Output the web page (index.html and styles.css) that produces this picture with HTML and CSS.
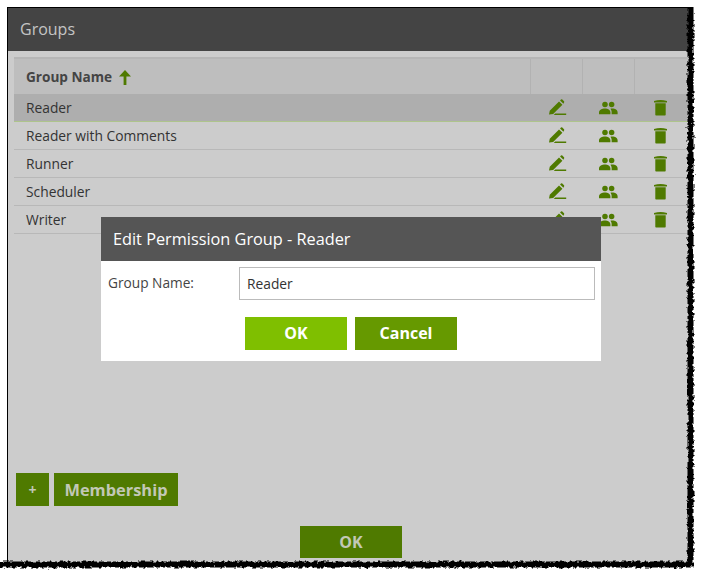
FILE: index.html
```html
<!DOCTYPE html>
<html lang="en">
<head>
<meta charset="utf-8">
<title>Groups</title>
<link rel="stylesheet" href="styles.css">
</head>
<body>
<svg width="0" height="0" class="defs">
  <symbol id="i-edit" viewBox="0 0 20 18"><path d="M1 16.5 L1.8 12.4 L11.6 2.6 L15.2 6.2 L5.4 16 Z M12.7 1.5 L13.7 .6 Q14.4 0 15.1 .6 L16.9 2.4 Q17.5 3.1 16.9 3.8 L16.3 5.1 Z M7.6 15.4 H19.2 V17 H6 Z"/></symbol>
  <symbol id="i-group" viewBox="0 0 20 14"><circle cx="6.3" cy="3.2" r="2.9"/><circle cx="13.3" cy="3.2" r="2.9"/><path d="M0 13.6 V11.6 C0 8.6 3.4 7.4 6.3 7.4 C9.2 7.4 12 8.6 12 11.6 V13.6 Z M13.3 13.6 V11.2 C13.3 9.8 12.8 8.7 12 7.8 C15.4 6.8 19.6 8.4 19.6 11.4 V13.6 Z"/></symbol>
  <symbol id="i-trash" viewBox="0 0 14 17"><path d="M0 1.6 Q7 -.6 14 1.6 V3 H0 Z M1.4 4 H12.6 V16.2 Q12.6 17 11.8 17 H2.2 Q1.4 17 1.4 16.2 Z"/></symbol>
</svg>

<main class="window">
  <header class="window-head">Groups</header>
  <div class="table">
    <div class="row row-head">
      <div class="cell cell-name">Group Name
        <svg class="sort" viewBox="0 0 12 15" width="12" height="15"><path d="M6 0 L12 6.6 H7.4 V15 H4.6 V6.6 H0 Z"/></svg>
      </div>
      <div class="cell cell-act"></div><div class="cell cell-act"></div><div class="cell cell-act"></div>
    </div>
    <div class="row row-active">
      <div class="cell cell-name">Reader</div>
      <div class="cell cell-act"><svg class="ic-edit"><use href="#i-edit"/></svg></div>
      <div class="cell cell-act"><svg class="ic-group"><use href="#i-group"/></svg></div>
      <div class="cell cell-act"><svg class="ic-trash"><use href="#i-trash"/></svg></div>
    </div>
    <div class="row">
      <div class="cell cell-name">Reader with Comments</div>
      <div class="cell cell-act"><svg class="ic-edit"><use href="#i-edit"/></svg></div>
      <div class="cell cell-act"><svg class="ic-group"><use href="#i-group"/></svg></div>
      <div class="cell cell-act"><svg class="ic-trash"><use href="#i-trash"/></svg></div>
    </div>
    <div class="row">
      <div class="cell cell-name">Runner</div>
      <div class="cell cell-act"><svg class="ic-edit"><use href="#i-edit"/></svg></div>
      <div class="cell cell-act"><svg class="ic-group"><use href="#i-group"/></svg></div>
      <div class="cell cell-act"><svg class="ic-trash"><use href="#i-trash"/></svg></div>
    </div>
    <div class="row">
      <div class="cell cell-name">Scheduler</div>
      <div class="cell cell-act"><svg class="ic-edit"><use href="#i-edit"/></svg></div>
      <div class="cell cell-act"><svg class="ic-group"><use href="#i-group"/></svg></div>
      <div class="cell cell-act"><svg class="ic-trash"><use href="#i-trash"/></svg></div>
    </div>
    <div class="row">
      <div class="cell cell-name">Writer</div>
      <div class="cell cell-act"><svg class="ic-edit"><use href="#i-edit"/></svg></div>
      <div class="cell cell-act"><svg class="ic-group"><use href="#i-group"/></svg></div>
      <div class="cell cell-act"><svg class="ic-trash"><use href="#i-trash"/></svg></div>
    </div>
  </div>
  <div class="actions">
    <button class="btn btn-dim btn-plus">+</button>
    <button class="btn btn-dim btn-member">Membership</button>
  </div>
  <div class="footer">
    <button class="btn btn-dim btn-wide">OK</button>
  </div>
</main>

<section class="modal">
  <h2 class="modal-head">Edit Permission Group - Reader</h2>
  <div class="modal-body">
    <div class="field">
      <label class="field-label" for="group-name">Group Name:</label>
      <input class="field-input" id="group-name" type="text" value="Reader">
    </div>
    <div class="modal-actions">
      <button class="btn btn-wide btn-primary">OK</button>
      <button class="btn btn-wide btn-secondary">Cancel</button>
    </div>
  </div>
</section>

<svg class="torn" width="704" height="578" viewBox="0 0 704 578">
  <defs>
    <filter id="jag" x="-40" y="-40" width="800" height="680" filterUnits="userSpaceOnUse" color-interpolation-filters="sRGB">
      <feTurbulence type="fractalNoise" baseFrequency="0.3" numOctaves="2" seed="11" result="n"/>
      <feDisplacementMap in="SourceGraphic" in2="n" scale="5" xChannelSelector="R" yChannelSelector="G"/>
      <feGaussianBlur stdDeviation="0.6"/>
    </filter>
  </defs>
  <path class="torn-edge" filter="url(#jag)" d="M690.5 -20 V564.5 H-20 V620 H740 V-20 Z"/>
  <path class="torn-fix" d="M0 0 H704 V7 H0 Z M0 7 H7 V560 H0 Z"/>
</svg>
</body>
</html>
```
FILE: styles.css
```css
* { box-sizing: border-box; }
html, body { margin: 0; padding: 0; }
body {
  position: relative;
  width: 704px;
  height: 578px;
  overflow: hidden;
  background: #fff;
  font-family: "Open Sans", "Liberation Sans", sans-serif;
  color: #333;
}
.defs { position: absolute; }
.window {
  display: flex;
  flex-direction: column;
  width: 690px;
  height: 565px;
  margin: 7px 0 0 7px;
  border-top: 1px solid #000;
  border-left: 1px solid #000;
  background: #ccc;
}
.window-head {
  height: 43px;
  padding-left: 12px;
  background: #444;
  color: #c4c4c4;
  font-size: 16px;
  line-height: 42px;
}
.table {
  margin: 6px 0 0 6px;
  border-top: 2px solid #b6b6b6;
}
.row {
  display: flex;
  height: 28px;
  border-bottom: 1px solid #b8b8b8;
  font-size: 13.8px;
  line-height: 27px;
}
.row-head {
  height: 35px;
  background: #bebebe;
  border-bottom: 0;
  color: #444;
  font-weight: 700;
  font-size: 13.6px;
}
.row-head .cell-name { line-height: 34px; }
.row-head .cell-act { border-left: 1px solid #b2b2b2; }
.row-active {
  background: #aeaeae;
  border-bottom-color: #aec48c;
}
.cell-name {
  display: flex;
  align-items: center;
  gap: 7px;
  flex: 0 0 516px;
  padding-left: 12px;
}
.cell-act {
  display: flex;
  align-items: center;
  justify-content: center;
  flex: 0 0 52px;
}
.sort { fill: #4f7a00; margin-top: 1px; }
.cell-act svg { fill: #4f7a00; }
.ic-edit { width: 19px; height: 17px; margin-left: 2px; }
.ic-group { width: 19px; height: 14px; margin-left: 1px; }
.ic-trash { width: 13px; height: 17px; margin-left: 1px; }
.actions {
  display: flex;
  gap: 5px;
  margin: 239px 0 0 8px;
}
.footer {
  display: flex;
  justify-content: center;
  margin-top: 20px;
  width: 686px;
}
.btn {
  border: 0;
  padding: 0;
  font-family: inherit;
  font-weight: 700;
  font-size: 16px;
  height: 33px;
  color: #fff;
}
.btn-dim { background: #4f7a00; color: #c2c8b6; }
.btn-plus { width: 33px; font-size: 14px; }
.btn-member { width: 124px; font-size: 16.4px; }
.btn-wide { width: 102px; }
.footer .btn-wide { height: 32px; }
.btn-primary { background: #7fbf00; padding-bottom: 2px; }
.btn-secondary { background: #669900; padding-bottom: 2px; }
.modal {
  position: absolute;
  left: 101px;
  top: 217px;
  width: 500px;
  height: 144px;
  background: #fff;
}
.modal-head {
  margin: 0;
  height: 44px;
  padding-left: 12px;
  background: #555;
  color: #fff;
  font-size: 16.3px;
  font-weight: 400;
  line-height: 44px;
}
.modal-body { padding: 6px 6px 0 6px; }
.field {
  display: flex;
  align-items: center;
  height: 33px;
}
.field-label {
  flex: 0 0 132px;
  padding-left: 1px;
  font-size: 13.7px;
  color: #444;
  margin-top: -2px;
}
.field-input {
  flex: 1;
  height: 33px;
  padding: 0 7px;
  border: 1.5px solid #bbb;
  border-radius: 0;
  outline: 0;
  font: 13.8px "Open Sans", "Liberation Sans", sans-serif;
  color: #333;
}
.modal-actions {
  display: flex;
  justify-content: center;
  gap: 8px;
  margin-top: 17px;
}
.torn {
  position: absolute;
  left: 0;
  top: 0;
  pointer-events: none;
}
.torn-edge {
  fill: #fff;
  stroke: #000;
  stroke-width: 6;
}
.torn-fix { fill: #fff; }
```
